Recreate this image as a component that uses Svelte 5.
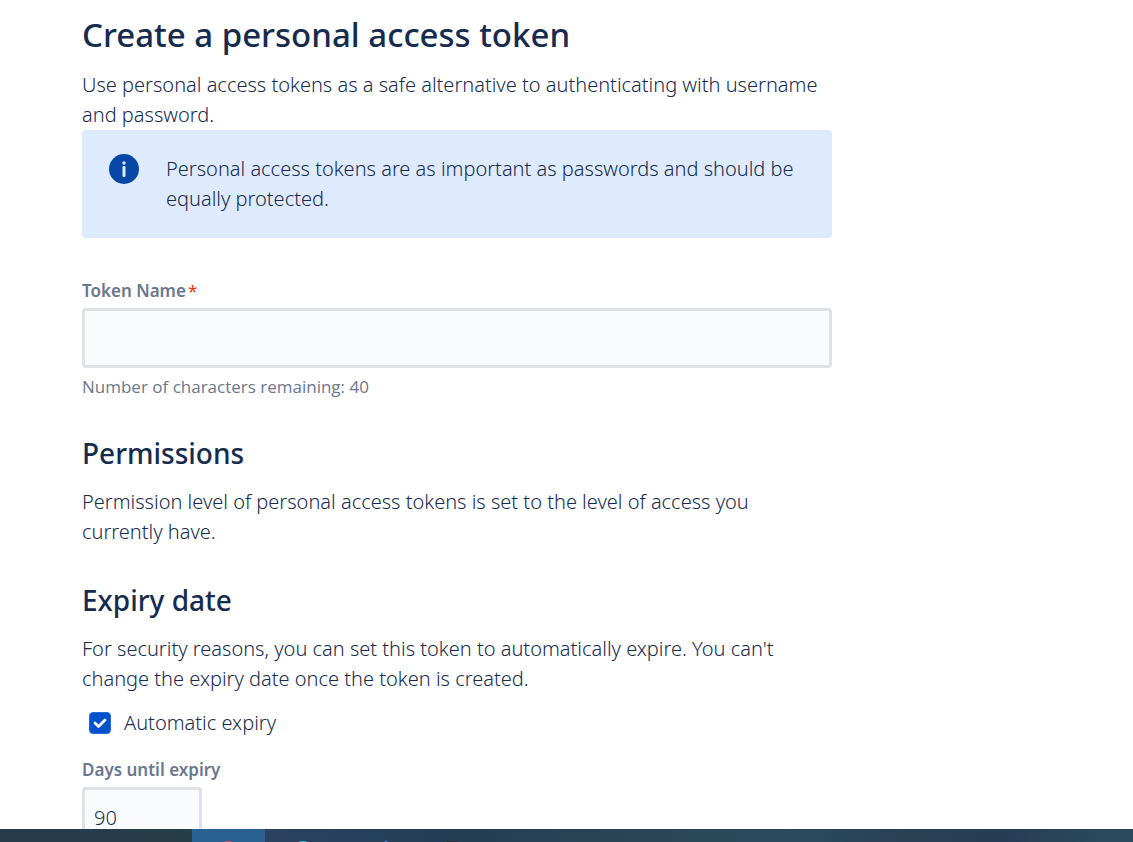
<script>
  const maxLength = 40;
  let name = $state('');
  let expires = $state(true);
  let days = $state('90');
  let remaining = $derived(maxLength - name.length);
</script>

<div class="screen">
  <main>
    <form>
      <h1>Create a personal access token</h1>
      <p>Use personal access tokens as a safe alternative to authenticating with username and password.</p>

      <section class="notice">
        <svg class="info" viewBox="0 0 30 30" aria-hidden="true">
          <circle cx="15" cy="15" r="15" fill="#0747a6" />
          <circle cx="15" cy="9" r="1.7" fill="#deebff" />
          <rect x="13.5" y="12" width="3" height="11" rx="1.2" fill="#deebff" />
        </svg>
        <p>Personal access tokens are as important as passwords and should be equally protected.</p>
      </section>

      <div class="field">
        <label for="token-name">Token Name<span class="required">*</span></label>
        <input id="token-name" class="text" type="text" maxlength={maxLength} bind:value={name} />
        <div class="hint">Number of characters remaining: {remaining}</div>
      </div>

      <h2>Permissions</h2>
      <p>Permission level of personal access tokens is set to the level of access you currently have.</p>

      <h2>Expiry date</h2>
      <p>For security reasons, you can set this token to automatically expire. You can't change the expiry date once the token is created.</p>

      <div class="check">
        <input id="auto-expiry" type="checkbox" bind:checked={expires} />
        <label for="auto-expiry">Automatic expiry</label>
      </div>

      <div class="field days">
        <label for="days">Days until expiry</label>
        <input id="days" class="text" type="text" inputmode="numeric" bind:value={days} />
      </div>
    </form>
  </main>

  <footer>
    <div class="active"></div>
    <svg class="apps" viewBox="0 0 300 13" aria-hidden="true">
      <circle cx="36" cy="23" r="11" fill="#dd5144" />
      <circle cx="111" cy="23" r="11" fill="#35c1dc" />
      <path d="M191 14l3-2.500 3 2.500z" fill="#22a7f0" />
      <rect x="255" y="12" width="11" height="2" fill="#27323a" />
    </svg>
  </footer>
</div>

<style>
  :global(body) {
    margin: 0;
    background: #fff;
  }

  .screen {
    display: flex;
    flex-direction: column;
    height: 100vh;
    overflow: hidden;
    color: #172b4d;
    font: 300 20px/30px 'Noto Sans', 'Open Sans', sans-serif;
  }

  main {
    flex: 1;
    min-height: 0;
    overflow: hidden;
    padding: 14px 82px 0;
  }

  form {
    max-width: 750px;
  }

  h1,
  h2,
  p {
    margin: 0;
  }

  h1 {
    margin-bottom: 14px;
    font-size: 33px;
    line-height: 42px;
    font-weight: 500;
  }

  h2 {
    margin: 35px 0 16px;
    font-size: 28px;
    line-height: 36px;
    font-weight: 500;
  }

  .notice {
    display: flex;
    gap: 27px;
    margin-bottom: 41px;
    padding: 24px 27px;
    border-radius: 4px;
    background: #deebff;
  }

  .info {
    flex: none;
    width: 30px;
    height: 30px;
  }

  .field {
    display: flex;
    flex-direction: column;
  }

  .field label {
    color: #6b778c;
    font-size: 17px;
    line-height: 24px;
    font-weight: 600;
  }

  .required {
    padding-left: 2px;
    color: #de350b;
    font-weight: 400;
  }

  .text {
    box-sizing: border-box;
    width: 100%;
    height: 60px;
    margin-top: 5px;
    padding: 0 9px;
    border: 3px solid #dfe1e6;
    border-radius: 4px;
    background: #fafbfc;
    color: #172b4d;
    font: inherit;
  }

  .hint {
    margin-top: 6px;
    color: #6b778c;
    font-family: 'Open Sans', 'Noto Sans', sans-serif;
    font-size: 17px;
    line-height: 26px;
    font-weight: 400;
  }

  .check {
    display: flex;
    align-items: center;
    gap: 13px;
    margin: 14px 0 20px 7px;
  }

  .check input {
    appearance: none;
    flex: none;
    width: 22px;
    height: 22px;
    margin: 0;
    border: 1px solid #dfe1e6;
    border-radius: 4px;
  }

  .check input:checked {
    border-color: #2a6bd8;
    background: #0052cc url("data:image/svg+xml,%3Csvg xmlns='http://www.w3.org/2000/svg' viewBox='0 0 20 20'%3E%3Cpath d='M5 10l3.500 3.500 6.500-6.500' fill='none' stroke='white' stroke-width='2.800' stroke-linecap='round' stroke-linejoin='round'/%3E%3C/svg%3E") center / 20px 20px no-repeat;
  }

  .days {
    max-width: 120px;
  }

  .days label {
    white-space: nowrap;
  }

  footer {
    display: flex;
    flex: none;
    height: 13px;
    padding-left: 192px;
    background: linear-gradient(90deg, #263c4c 0, #263c4c 10%, #263c45 16%, #2a4260 24%, #26405b 31%, #233e53 40%, #2b4658 58%, #2b4a5e 70%, #294055 80%, #263d54 88%, #2b485c 97%);
  }

  .active {
    width: 73px;
    background: #286192;
  }

  .apps {
    width: 300px;
    height: 13px;
    margin-left: -73px;
  }
</style>
